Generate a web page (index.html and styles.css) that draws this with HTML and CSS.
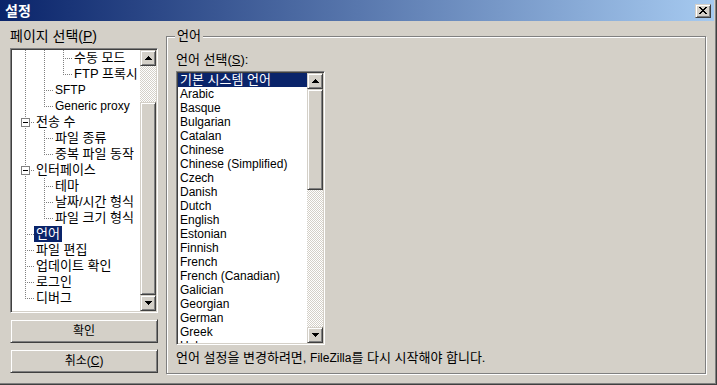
FILE: index.html
```html
<!DOCTYPE html>
<html lang="ko">
<head>
    <meta charset="UTF-8">
    <title>설정</title>
    <link rel="stylesheet" href="styles.css">
</head>
<body>
    <div class="window">
        <div class="titlebar">
            <span class="title">설정</span>
            <button class="close raised">
                <svg width="8" height="7" viewBox="0 0 8 7"><path d="M0 0h2v1h-2z M6 0h2v1h-2z M1 1h2v1h-2z M5 1h2v1h-2z M2 2h4v1h-4z M3 3h2v1h-2z M2 4h4v1h-4z M1 5h2v1h-2z M5 5h2v1h-2z M0 6h2v1h-2z M6 6h2v1h-2z" fill="#000"/></svg>
            </button>
        </div>

        <div class="main">
            <div class="left">
                <div class="caption big">페이지 선택(<u>P</u>)</div>
                <div class="tree sunken">
                    <div class="tree-items">
                        <div class="row"><i class="g v"></i><i class="g v"></i><i class="g t"></i><span class="label">수동 모드</span></div>
                        <div class="row"><i class="g v"></i><i class="g v"></i><i class="g l"></i><span class="label">FTP 프록시</span></div>
                        <div class="row"><i class="g v"></i><i class="g t"></i><span class="label lat">SFTP</span></div>
                        <div class="row"><i class="g v"></i><i class="g l"></i><span class="label lat">Generic proxy</span></div>
                        <div class="row"><i class="g t"><b class="box"></b></i><span class="label">전송 수</span></div>
                        <div class="row"><i class="g v"></i><i class="g t"></i><span class="label">파일 종류</span></div>
                        <div class="row"><i class="g v"></i><i class="g l"></i><span class="label">중복 파일 동작</span></div>
                        <div class="row"><i class="g t"><b class="box"></b></i><span class="label">인터페이스</span></div>
                        <div class="row"><i class="g v"></i><i class="g t"></i><span class="label">테마</span></div>
                        <div class="row"><i class="g v"></i><i class="g t"></i><span class="label">날짜/시간 형식</span></div>
                        <div class="row"><i class="g v"></i><i class="g l"></i><span class="label">파일 크기 형식</span></div>
                        <div class="row"><i class="g t"></i><span class="label selected">언어</span></div>
                        <div class="row"><i class="g t"></i><span class="label">파일 편집</span></div>
                        <div class="row"><i class="g t"></i><span class="label">업데이트 확인</span></div>
                        <div class="row"><i class="g t"></i><span class="label">로그인</span></div>
                        <div class="row"><i class="g l"></i><span class="label">디버그</span></div>
                    </div>
                    <div class="scrollbar">
                        <div class="sb-btn raised"><svg width="7" height="4" viewBox="0 0 7 4"><path d="M3 0h1v1h-1z M2 1h3v1h-3z M1 2h5v1h-5z M0 3h7v1h-7z"/></svg></div>
                        <div class="sb-track"><div class="sb-thumb raised tree-thumb"></div></div>
                        <div class="sb-btn raised"><svg width="7" height="4" viewBox="0 0 7 4"><path d="M0 0h7v1h-7z M1 1h5v1h-5z M2 2h3v1h-3z M3 3h1v1h-1z"/></svg></div>
                    </div>
                </div>
                <button class="btn raised">확인</button>
                <button class="btn raised">취소(<u>C</u>)</button>
            </div>

            <div class="group">
                <span class="group-title">언어</span>
                <div class="caption">언어 선택(<u>S</u>):</div>
                <div class="list sunken">
                    <ul class="list-items">
                        <li class="selected ko">기본 시스템 언어</li>
                        <li>Arabic</li>
                        <li>Basque</li>
                        <li>Bulgarian</li>
                        <li>Catalan</li>
                        <li>Chinese</li>
                        <li>Chinese (Simplified)</li>
                        <li>Czech</li>
                        <li>Danish</li>
                        <li>Dutch</li>
                        <li>English</li>
                        <li>Estonian</li>
                        <li>Finnish</li>
                        <li>French</li>
                        <li>French (Canadian)</li>
                        <li>Galician</li>
                        <li>Georgian</li>
                        <li>German</li>
                        <li>Greek</li>
                        <li>Hebrew</li>
                    </ul>
                    <div class="scrollbar">
                        <div class="sb-btn raised"><svg width="7" height="4" viewBox="0 0 7 4"><path d="M3 0h1v1h-1z M2 1h3v1h-3z M1 2h5v1h-5z M0 3h7v1h-7z"/></svg></div>
                        <div class="sb-track"><div class="sb-thumb raised list-thumb"></div></div>
                        <div class="sb-btn raised"><svg width="7" height="4" viewBox="0 0 7 4"><path d="M0 0h7v1h-7z M1 1h5v1h-5z M2 2h3v1h-3z M3 3h1v1h-1z"/></svg></div>
                    </div>
                </div>
                <div class="note">언어 설정을 변경하려면, <span class="lat">FileZilla</span>를 다시 시작해야 합니다.</div>
            </div>
        </div>
    </div>
</body>
</html>
```

FILE: styles.css
```css
* {
    box-sizing: border-box;
}

body {
    margin: 0;
    font: 13px/16px "Liberation Sans", "Noto Sans CJK KR", sans-serif;
    color: #000;
}

u {
    text-decoration: underline;
    text-underline-offset: 1px;
}

.lat {
    font-size: 12px;
}

.window {
    width: 717px;
    height: 385px;
    background: #d4d0c8;
    border-right: 1px solid #404040;
    border-bottom: 1px solid #404040;
    box-shadow: inset -1px -1px 0 #808080;
    display: flex;
    flex-direction: column;
}

.titlebar {
    height: 21px;
    margin-right: 2px;
    padding: 0 3px 0 5px;
    display: flex;
    align-items: center;
    justify-content: space-between;
    background: linear-gradient(to right, #0a246a, #a6caf0);
}

.title {
    color: #fff;
    font-size: 14px;
    font-weight: bold;
}

.raised {
    background: #d4d0c8;
    border: 1px solid;
    border-color: #d4d0c8 #404040 #404040 #d4d0c8;
    box-shadow: inset 1px 1px 0 #fff, inset -1px -1px 0 #808080;
}

.close {
    width: 16px;
    height: 14px;
    padding: 0;
    display: flex;
    align-items: center;
    justify-content: center;
}

.main {
    flex: 1;
    display: flex;
    padding-left: 10px;
}

.left {
    width: 148px;
    padding-top: 7px;
    display: flex;
    flex-direction: column;
}

.caption {
    height: 16px;
    white-space: nowrap;
}

.caption.big {
    font-size: 14px;
}

.sunken {
    display: flex;
    background: #fff;
    border: 1px solid;
    border-color: #808080 #fff #fff #808080;
    box-shadow: inset 1px 1px 0 #404040, inset -1px -1px 0 #d4d0c8;
    padding: 1px;
}

.tree {
    margin-top: 4px;
    height: 265px;
}

.tree-items {
    flex: 1;
    overflow: hidden;
    padding-left: 4px;
}

.row {
    display: flex;
    height: 16px;
    white-space: nowrap;
}

.g {
    position: relative;
    flex: none;
    width: 19px;
    height: 16px;
}

.g::before {
    content: '';
    position: absolute;
    left: 9px;
    top: 0;
    width: 1px;
    height: 16px;
    background: repeating-linear-gradient(to bottom, #808080 0 1px, transparent 1px 2px);
}

.g.l::before {
    height: 9px;
}

.g.t::after,
.g.l::after {
    content: '';
    position: absolute;
    left: 11px;
    top: 8px;
    width: 8px;
    height: 1px;
    background: repeating-linear-gradient(to right, #808080 0 1px, transparent 1px 2px);
}

.box {
    position: absolute;
    left: 5px;
    top: 4px;
    width: 9px;
    height: 9px;
    background: #fff;
    border: 1px solid #808080;
    z-index: 1;
}

.box::after {
    content: '';
    position: absolute;
    left: 1px;
    top: 3px;
    width: 5px;
    height: 1px;
    background: #000;
}

.label {
    margin-left: -1px;
    padding: 0 2px;
    line-height: 16px;
}

.selected {
    background: #0a246a;
    color: #fff;
}

.scrollbar {
    flex: none;
    width: 16px;
    display: flex;
    flex-direction: column;
}

.sb-btn {
    height: 16px;
    display: flex;
    align-items: center;
    justify-content: center;
}

.sb-btn svg {
    fill: #000;
}

.sb-track {
    flex: 1;
    display: flex;
    flex-direction: column;
    background: repeating-conic-gradient(#fff 0 25%, #d4d0c8 0 50%) 0 0 / 2px 2px;
}

.sb-thumb {
    flex: none;
}

.tree-thumb {
    height: 193px;
    margin-top: auto;
}

.list-thumb {
    height: 101px;
}

.btn {
    height: 24px;
    margin-top: 6px;
    padding: 0;
    font: inherit;
    font-size: 12px;
    color: #000;
}

.group {
    position: relative;
    width: 540px;
    height: 338px;
    margin: 15px 0 0 8px;
    padding: 15px 0 0 9px;
    border: 1px solid #808080;
    box-shadow: 1px 1px 0 #fff, inset 1px 1px 0 #fff;
}

.group-title {
    position: absolute;
    top: -9px;
    left: 8px;
    padding: 0 2px;
    background: #d4d0c8;
}

.list {
    margin-top: 3px;
    width: 149px;
    height: 274px;
}

.list-items {
    flex: 1;
    margin: 0;
    padding: 0;
    list-style: none;
    overflow: hidden;
}

.list-items li {
    height: 14px;
    line-height: 14px;
    padding-left: 2px;
    font-size: 12px;
    white-space: nowrap;
}

.list-items li.ko {
    font-size: 13px;
}

.note {
    margin-top: 5px;
    white-space: nowrap;
}
```
